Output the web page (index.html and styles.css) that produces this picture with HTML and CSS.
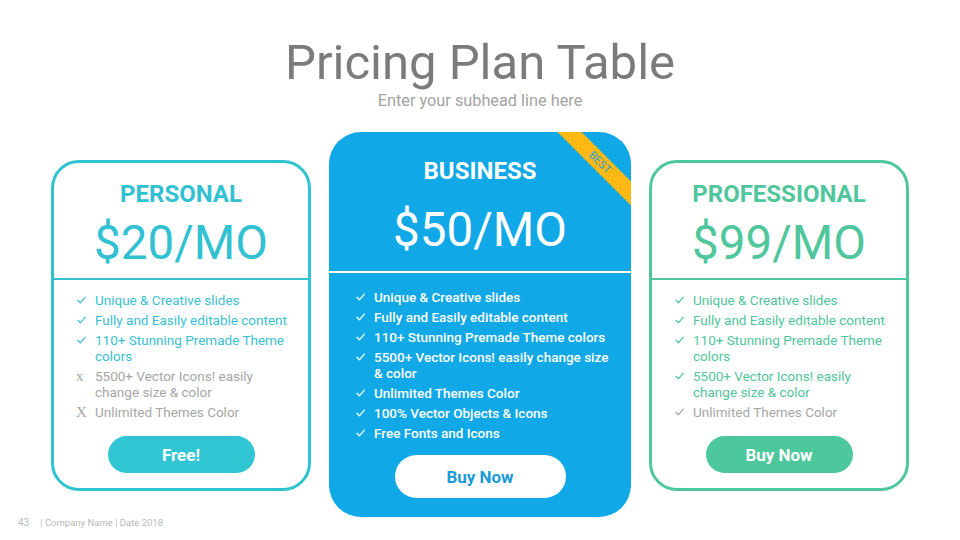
FILE: index.html
```html
<!DOCTYPE html>
<html lang="en">
<head>
<meta charset="utf-8">
<title>Pricing Plan Table</title>
<link rel="stylesheet" href="styles.css">
</head>
<body>
<div class="slide">
  <header class="header">
    <h1 class="title">Pricing Plan Table</h1>
    <p class="subtitle">Enter your subhead line here</p>
  </header>

  <main class="plans">
    <section class="card personal">
      <div class="card-head">
        <h2 class="plan">PERSONAL</h2>
        <div class="price">$20/MO</div>
      </div>
      <ul class="features">
        <li><span class="mk"><svg class="chk" viewBox="0 0 9 8" width="9" height="8"><path d="M1 4.3 L3.4 6.8 L8.3 1.2"/></svg></span><span>Unique &amp; Creative slides</span></li>
        <li><span class="mk"><svg class="chk" viewBox="0 0 9 8" width="9" height="8"><path d="M1 4.3 L3.4 6.8 L8.3 1.2"/></svg></span><span>Fully and Easily editable content</span></li>
        <li><span class="mk"><svg class="chk" viewBox="0 0 9 8" width="9" height="8"><path d="M1 4.3 L3.4 6.8 L8.3 1.2"/></svg></span><span>110+ Stunning Premade Theme colors</span></li>
        <li class="off"><span class="mk x">x</span><span>5500+ Vector Icons! easily change size &amp; color</span></li>
        <li class="off"><span class="mk x">X</span><span>Unlimited Themes Color</span></li>
      </ul>
      <a class="btn">Free!</a>
    </section>

    <section class="card business">
      <div class="ribbon">BEST</div>
      <div class="card-head">
        <h2 class="plan">BUSINESS</h2>
        <div class="price">$50/MO</div>
      </div>
      <ul class="features">
        <li><span class="mk"><svg class="chk" viewBox="0 0 9 8" width="9" height="8"><path d="M1 4.3 L3.4 6.8 L8.3 1.2"/></svg></span><span>Unique &amp; Creative slides</span></li>
        <li><span class="mk"><svg class="chk" viewBox="0 0 9 8" width="9" height="8"><path d="M1 4.3 L3.4 6.8 L8.3 1.2"/></svg></span><span>Fully and Easily editable content</span></li>
        <li><span class="mk"><svg class="chk" viewBox="0 0 9 8" width="9" height="8"><path d="M1 4.3 L3.4 6.8 L8.3 1.2"/></svg></span><span>110+ Stunning Premade Theme colors</span></li>
        <li><span class="mk"><svg class="chk" viewBox="0 0 9 8" width="9" height="8"><path d="M1 4.3 L3.4 6.8 L8.3 1.2"/></svg></span><span>5500+ Vector Icons! easily change size &amp; color</span></li>
        <li><span class="mk"><svg class="chk" viewBox="0 0 9 8" width="9" height="8"><path d="M1 4.3 L3.4 6.8 L8.3 1.2"/></svg></span><span>Unlimited Themes Color</span></li>
        <li><span class="mk"><svg class="chk" viewBox="0 0 9 8" width="9" height="8"><path d="M1 4.3 L3.4 6.8 L8.3 1.2"/></svg></span><span>100% Vector Objects &amp; Icons</span></li>
        <li><span class="mk"><svg class="chk" viewBox="0 0 9 8" width="9" height="8"><path d="M1 4.3 L3.4 6.8 L8.3 1.2"/></svg></span><span>Free Fonts and Icons</span></li>
      </ul>
      <a class="btn">Buy Now</a>
    </section>

    <section class="card professional">
      <div class="card-head">
        <h2 class="plan">PROFESSIONAL</h2>
        <div class="price">$99/MO</div>
      </div>
      <ul class="features">
        <li><span class="mk"><svg class="chk" viewBox="0 0 9 8" width="9" height="8"><path d="M1 4.3 L3.4 6.8 L8.3 1.2"/></svg></span><span>Unique &amp; Creative slides</span></li>
        <li><span class="mk"><svg class="chk" viewBox="0 0 9 8" width="9" height="8"><path d="M1 4.3 L3.4 6.8 L8.3 1.2"/></svg></span><span>Fully and Easily editable content</span></li>
        <li><span class="mk"><svg class="chk" viewBox="0 0 9 8" width="9" height="8"><path d="M1 4.3 L3.4 6.8 L8.3 1.2"/></svg></span><span>110+ Stunning Premade Theme colors</span></li>
        <li><span class="mk"><svg class="chk" viewBox="0 0 9 8" width="9" height="8"><path d="M1 4.3 L3.4 6.8 L8.3 1.2"/></svg></span><span>5500+ Vector Icons! easily change size &amp; color</span></li>
        <li class="off"><span class="mk"><svg class="chk" viewBox="0 0 9 8" width="9" height="8"><path d="M1 4.3 L3.4 6.8 L8.3 1.2"/></svg></span><span>Unlimited Themes Color</span></li>
      </ul>
      <a class="btn">Buy Now</a>
    </section>
  </main>

  <footer class="footer">
    <span class="page">43</span>
    <span class="meta">| Company Name | Date 2018</span>
  </footer>
</div>
</body>
</html>
```

FILE: styles.css
```css
* { box-sizing: border-box; }

html, body {
  margin: 0;
  padding: 0;
  background: #ffffff;
}

body {
  font-family: Roboto, "Liberation Sans", Arial, sans-serif;
}

.slide {
  width: 960px;
  height: 540px;
  overflow: hidden;
  display: flex;
  flex-direction: column;
}

/* Header */
.header {
  padding-top: 33px;
  text-align: center;
}

.title {
  margin: 0;
  font-size: 49px;
  line-height: 60px;
  font-weight: 400;
  color: #7b7b7b;
}

.subtitle {
  margin: -2px 0 0;
  font-size: 16.3px;
  line-height: 20px;
  color: #a3a3a3;
}

/* Plans row */
.plans {
  margin-top: 21px;
  height: 385px;
  display: flex;
  justify-content: center;
  align-items: center;
  gap: 18px;
}

.card {
  position: relative;
  display: flex;
  flex-direction: column;
  align-items: stretch;
  background: #fff;
}

.personal,
.professional {
  width: 260px;
  height: 331px;
  margin-top: 2px;
  border: 3px solid;
  border-radius: 28px;
}

.personal { border-color: #2fc3d1; }
.professional { border-color: #4fc79c; }

.business {
  width: 302px;
  height: 385px;
  border-radius: 32px;
  background: #10a8e6;
  overflow: hidden;
}

.card-head {
  text-align: center;
  padding-top: 17px;
  padding-bottom: 10px;
  border-bottom: 2px solid;
}

.plan {
  margin: 0;
  font-size: 24px;
  line-height: 28px;
  font-weight: 700;
}

.price {
  margin-top: 10px;
  font-size: 47.5px;
  line-height: 50px;
  font-weight: 400;
}

.personal .card-head { color: #31c1d0; border-color: #31c1d0; }
.professional .card-head { color: #4fc69b; border-color: #4fc69b; }

.business .card-head {
  color: #ffffff;
  border-color: #ffffff;
  padding-top: 25px;
  padding-bottom: 16px;
}
.business .price { margin-top: 20px; }

/* Features */
.features {
  list-style: none;
  margin: 0;
  padding: 12px 16px 0 23px;
  display: flex;
  flex-direction: column;
  gap: 4px;
  font-size: 13.5px;
  line-height: 16px;
}

.features li {
  display: flex;
  align-items: flex-start;
}

.mk {
  flex: 0 0 18px;
  height: 16px;
  display: flex;
  align-items: flex-start;
}

.chk {
  display: block;
  margin-top: 4px;
  fill: none;
  stroke: currentColor;
  stroke-width: 1.25;
  stroke-linecap: round;
  stroke-linejoin: round;
}

.mk.x {
  font-family: "Liberation Serif", "Times New Roman", serif;
  font-size: 15px;
  line-height: 16px;
  margin-left: -1px;
  flex-basis: 19px;
}

.personal .features { color: #3bbfcf; }
.professional .features { color: #52c49c; }
.features li.off { color: #a6a6a6; }

.business .features {
  color: #ffffff;
  font-weight: 500;
  padding: 16px 16px 0 27px;
}

/* Buttons */
.btn {
  align-self: center;
  display: flex;
  align-items: center;
  justify-content: center;
  width: 147px;
  height: 37px;
  margin-top: 16px;
  border-radius: 19px;
  font-size: 17px;
  font-weight: 700;
  color: #ffffff;
  cursor: pointer;
}

.personal .btn { background: #2fc5d3; }
.professional .btn { background: #4dc89c; }

.business .btn {
  width: 171px;
  height: 43px;
  margin-top: 14px;
  border-radius: 22px;
  background: #ffffff;
  color: #1a9ad8;
}

/* Ribbon */
.ribbon {
  position: absolute;
  top: 22px;
  right: -29px;
  width: 120px;
  height: 17px;
  background: #fdb913;
  color: #1e9fd6;
  font-size: 11px;
  line-height: 17px;
  text-align: center;
  transform: rotate(45deg);
}

/* Footer */
.footer {
  margin-top: 0;
  padding-left: 18px;
  display: flex;
  align-items: center;
  gap: 11px;
  line-height: 12px;
  color: #b9b9b9;
}

.page { font-size: 10px; }
.meta { font-size: 9.5px; }
```
